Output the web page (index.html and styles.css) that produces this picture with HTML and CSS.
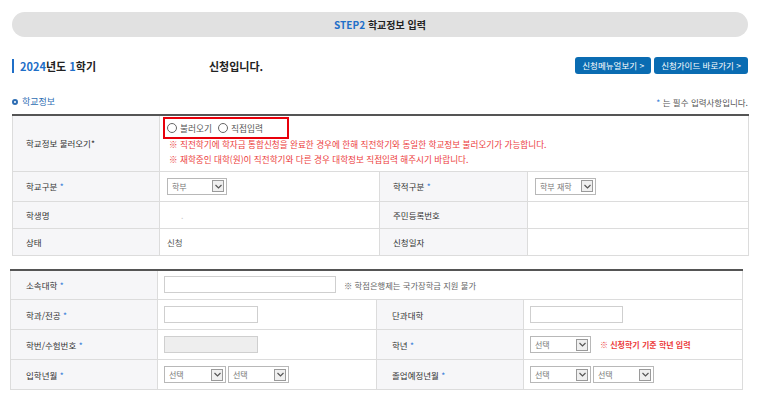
FILE: index.html
```html
<!DOCTYPE html>
<html lang="ko">
<head>
<meta charset="utf-8">
<link rel="stylesheet" href="styles.css">
</head>
<body>
<div class="page">
  <div class="step"><span class="blue">STEP2</span> 학교정보 입력</div>

  <div class="title-row">
    <div class="title"><span class="bar"></span><span class="blue">2024</span>년도 <span class="blue">1</span>학기</div>
    <div class="apply">신청입니다.</div>
    <div class="btns">
      <a class="btn">신청메뉴얼보기 &gt;</a>
      <a class="btn">신청가이드 바로가기 &gt;</a>
    </div>
  </div>

  <div class="sec-row">
    <div class="sec"><span class="ring"></span>학교정보</div>
    <div class="req"><span class="ast">*</span> 는 필수 입력사항입니다.</div>
  </div>

  <table class="grid t1">
    <colgroup><col class="c1"><col class="c2"><col class="c3"><col class="c4"></colgroup>
    <tr class="r-load">
      <th>학교정보 불러오기*</th>
      <td colspan="3" class="load">
        <div class="redbox">
          <label class="radio"><span class="circle"></span>불러오기</label>
          <label class="radio"><span class="circle"></span>직접입력</label>
        </div>
        <p class="warn">※ 직전학기에 학자금 통합신청을 완료한 경우에 한해 직전학기와 동일한 학교정보 불러오기가 가능합니다.</p>
        <p class="warn">※ 재학중인 대학(원)이 직전학기와 다른 경우 대학정보 직접입력 해주시기 바랍니다.</p>
      </td>
    </tr>
    <tr class="r30">
      <th>학교구분 <span class="ast">*</span></th>
      <td><span class="sel w60"><span>학부</span><i class="arr"><svg viewBox="0 0 9 9" width="9" height="9"><path d="M1.5 3 L4.5 6 L7.5 3" fill="none" stroke="#555" stroke-width="1.2"/></svg></i></span></td>
      <th>학적구분 <span class="ast">*</span></th>
      <td><span class="sel w61"><span>학부 재학</span><i class="arr"><svg viewBox="0 0 9 9" width="9" height="9"><path d="M1.5 3 L4.5 6 L7.5 3" fill="none" stroke="#555" stroke-width="1.2"/></svg></i></span></td>
    </tr>
    <tr class="r27">
      <th>학생명</th>
      <td><span class="dot">.</span></td>
      <th>주민등록번호</th>
      <td></td>
    </tr>
    <tr class="r27">
      <th>상태</th>
      <td>신청</td>
      <th>신청일자</th>
      <td></td>
    </tr>
  </table>

  <table class="grid t2">
    <colgroup><col class="d1"><col class="d2"><col class="d3"><col class="d4"></colgroup>
    <tr class="r30">
      <th>소속대학 <span class="ast">*</span></th>
      <td colspan="3"><span class="inp w172"></span><span class="note">※ 학점은행제는 국가장학금 지원 불가</span></td>
    </tr>
    <tr class="r30">
      <th>학과/전공 <span class="ast">*</span></th>
      <td><span class="inp w94"></span></td>
      <th>단과대학</th>
      <td><span class="inp w93"></span></td>
    </tr>
    <tr class="r30">
      <th>학번/수험번호 <span class="ast">*</span></th>
      <td><span class="inp w94 dis"></span></td>
      <th>학년 <span class="ast">*</span></th>
      <td><span class="sel w61"><span>선택</span><i class="arr"><svg viewBox="0 0 9 9" width="9" height="9"><path d="M1.5 3 L4.5 6 L7.5 3" fill="none" stroke="#555" stroke-width="1.2"/></svg></i></span><span class="warn-in">※ 신청학기 기준 학년 입력</span></td>
    </tr>
    <tr class="r30">
      <th>입학년월 <span class="ast">*</span></th>
      <td><span class="sel w62"><span>선택</span><i class="arr"><svg viewBox="0 0 9 9" width="9" height="9"><path d="M1.5 3 L4.5 6 L7.5 3" fill="none" stroke="#555" stroke-width="1.2"/></svg></i></span><span class="sel w61"><span>선택</span><i class="arr"><svg viewBox="0 0 9 9" width="9" height="9"><path d="M1.5 3 L4.5 6 L7.5 3" fill="none" stroke="#555" stroke-width="1.2"/></svg></i></span></td>
      <th>졸업예정년월 <span class="ast">*</span></th>
      <td><span class="sel w61"><span>선택</span><i class="arr"><svg viewBox="0 0 9 9" width="9" height="9"><path d="M1.5 3 L4.5 6 L7.5 3" fill="none" stroke="#555" stroke-width="1.2"/></svg></i></span><span class="sel w61"><span>선택</span><i class="arr"><svg viewBox="0 0 9 9" width="9" height="9"><path d="M1.5 3 L4.5 6 L7.5 3" fill="none" stroke="#555" stroke-width="1.2"/></svg></i></span></td>
    </tr>
  </table>
</div>
</body>
</html>
```

FILE: styles.css
```css
* { box-sizing: border-box; }
html, body { margin: 0; padding: 0; background: #fff; }
body {
  font-family: "Noto Sans CJK KR", "Noto Sans", sans-serif;
  color: #333;
  width: 758px;
  height: 398px;
  overflow: hidden;
}
.page { padding: 12px 10px 0 12px; }

.blue { color: #1f6fc8; }

.step {
  height: 25px;
  border-radius: 13px;
  background: #e1e1e1;
  text-align: center;
  font-size: 10px;
  font-weight: 700;
  line-height: 25px;
  color: #222;
}

.title-row {
  display: grid;
  grid-template-columns: 197px 1fr auto;
  align-items: center;
  margin-top: 20px;
  height: 17px;
}
.title {
  display: flex;
  align-items: center;
  font-size: 11px;
  font-weight: 700;
  color: #222;
  white-space: pre;
}
.title .bar {
  width: 2px;
  height: 14px;
  background: #1f6fc8;
  margin-right: 6px;
}
.apply { font-size: 11px; font-weight: 700; color: #222; }
.btns { display: flex; gap: 3px; }
.btn {
  display: inline-block;
  height: 17px;
  line-height: 17px;
  padding: 0 7px;
  border-radius: 3px;
  background: #0a6cb2;
  color: #fff;
  font-size: 8.5px;
}

.sec-row {
  display: flex;
  justify-content: space-between;
  align-items: center;
  margin-top: 21px;
  height: 13px;
}
.sec {
  display: flex;
  align-items: center;
  font-size: 9px;
  color: #2d6db3;
}
.ring {
  width: 6px;
  height: 6px;
  border: 2px solid #2d6db3;
  border-radius: 50%;
  margin-right: 4px;
}
.req { font-size: 8.5px; color: #555; }
.ast { color: #3a7fd8; }

.grid {
  border-collapse: collapse;
  table-layout: fixed;
  font-size: 8.5px;
}
.grid th, .grid td {
  border: 1px solid #dcdcdc;
  padding: 0;
  vertical-align: middle;
  text-align: left;
}
.grid th {
  background: #f6f6f8;
  font-weight: 400;
  color: #333;
  padding-left: 13px;
}
.grid td { padding-left: 7px; color: #555; }
.grid tr:first-child th, .grid tr:first-child td { border-top: 2px solid #555; }

.t1 { width: 736px; margin-top: 6px; }
.t1 .c1 { width: 147px; }
.t1 .c2 { width: 220px; }
.t1 .c3 { width: 148px; }
.t1 .c4 { width: 221px; }

.t2 { width: 732px; margin-top: 13px; margin-left: -2px; }
.t2 .d1 { width: 147px; }
.t2 .d2 { width: 219px; }
.t2 .d3 { width: 147px; }
.t2 .d4 { width: 219px; }
.t2 th { padding-left: 15px; }
.t2 td { padding-left: 6px; }

.r-load { height: 56px; }
.r30 { height: 30px; }
.r27 { height: 27px; }

.grid td.load { padding-left: 3px; vertical-align: top; padding-top: 1px; }
.redbox {
  display: inline-flex;
  align-items: center;
  gap: 6px;
  height: 22px;
  border: 2.5px solid #e8000b;
  padding: 0 24px 0 2px;
  color: #555;
}
.radio { display: inline-flex; align-items: center; font-size: 8.7px; }
.circle {
  width: 10px;
  height: 10px;
  border: 1px solid #666;
  border-radius: 50%;
  background: #fff;
  margin-right: 3px;
}
.warn {
  margin: 0;
  padding-left: 6px;
  color: #ec3b3b;
  font-size: 8.6px;
  line-height: 15px;
}
.warn:first-of-type { margin-top: -2px; }

.sel {
  display: inline-flex;
  align-items: center;
  justify-content: space-between;
  height: 17px;
  border: 1px solid #b8b8b8;
  padding: 0 2px 0 4px;
  color: #777;
  font-size: 8px;
  vertical-align: middle;
  background: #fff;
}
.sel + .sel { margin-left: 2px; }
.arr {
  display: inline-flex;
  align-items: center;
  justify-content: center;
  width: 12px;
  height: 12px;
  border: 1px solid #9a9a9a;
  background: #efefef;
}
.w60 { width: 60px; }
.w61 { width: 61px; }
.w62 { width: 62px; }

.inp {
  display: inline-block;
  height: 17px;
  border: 1px solid #cfcfcf;
  background: #fff;
  vertical-align: middle;
}
.inp.dis { background: #eeeeee; }
.w172 { width: 172px; }
.w94 { width: 94px; }
.w93 { width: 93px; }

.note { margin-left: 8px; font-size: 8.3px; color: #666; vertical-align: middle; }
.warn-in { margin-left: 9px; font-size: 8px; color: #ec3b3b; font-weight: 700; vertical-align: middle; }
.dot { color: #ccc; margin-left: 14px; }
```
